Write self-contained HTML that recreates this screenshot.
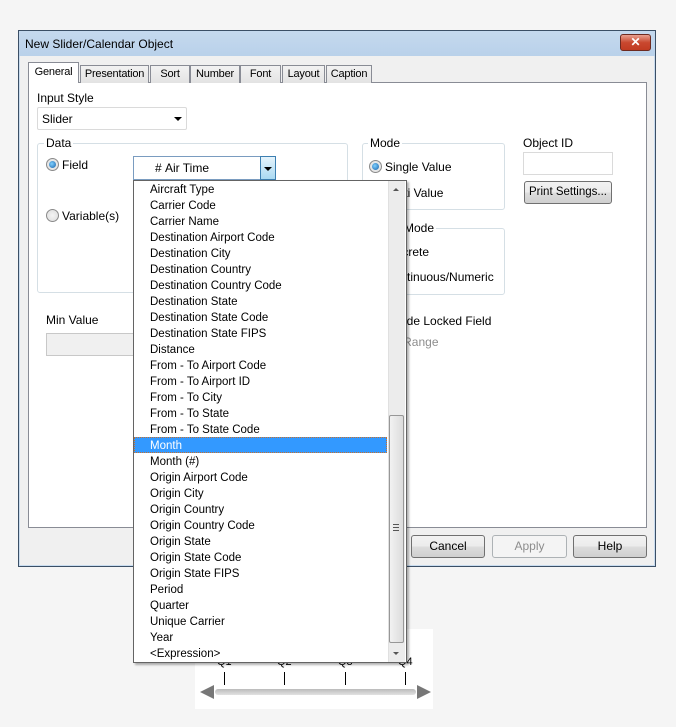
<!DOCTYPE html>
<html><head><style>
*{margin:0;padding:0;box-sizing:border-box}
body{width:676px;height:727px;background:#f5f5f5;font-family:"Liberation Sans",sans-serif;font-size:12px;color:#000;position:relative;overflow:hidden}
.a{position:absolute}
.t{position:absolute;white-space:nowrap;line-height:14px}
.grp{position:absolute;border:1px solid #d5dfe5;border-radius:3px}
.rad{position:absolute;width:13px;height:13px;border-radius:50%;border:1px solid #8a8a8a;background:radial-gradient(circle,#f4f4f4 0,#dcdcdc 100%)}
.rad.on::after{content:"";position:absolute;left:2px;top:2px;width:7px;height:7px;border-radius:50%;background:radial-gradient(circle at 40% 40%,#7fd0ff,#1660a8)}
.btn{position:absolute;height:23px;border:1px solid #707070;border-radius:3px;background:linear-gradient(#f2f2f2,#ebebeb 50%,#dddddd 51%,#cfcfcf);text-align:center;line-height:21px}
.tab{position:absolute;top:65px;height:18px;border:1px solid #898c95;border-bottom:none;background:linear-gradient(#f2f2f2,#e3e3e3);line-height:16px;text-align:center;font-size:11px;letter-spacing:-0.2px;overflow:hidden;white-space:nowrap}
.li{position:absolute;left:16px;height:16px;line-height:16px;font-size:11.5px}
</style></head><body>
<div class="a" style="left:18px;top:30px;width:638px;height:537px;background:#f0f0f0;border:1px solid #3b4f66;box-shadow:inset 0 0 0 1px #c9dcef"></div>
<div class="a" style="left:19px;top:31px;width:636px;height:25px;background:linear-gradient(#c5d9ee,#b9d1ea)"></div>
<div class="t" style="left:25px;top:37px;font-size:12px">New Slider/Calendar Object</div>
<div class="a" style="left:620px;top:34px;width:31px;height:17px;border:1px solid #6d2a20;border-radius:3px;background:linear-gradient(#e8a090,#c9482f 50%,#c13b22);color:#fff;font-weight:bold;text-align:center;line-height:15px;font-size:12px">✕</div>
<div class="a" style="left:28px;top:82px;width:619px;height:446px;background:#fff;border:1px solid #898c95"></div>
<div class="tab" style="left:28px;top:62px;height:21px;width:51px;background:#fff;z-index:2;line-height:18px">General</div>
<div class="tab" style="left:80px;width:69px">Presentation</div>
<div class="tab" style="left:150px;width:40px">Sort</div>
<div class="tab" style="left:190px;width:50px">Number</div>
<div class="tab" style="left:240px;width:41px">Font</div>
<div class="tab" style="left:282px;width:43px">Layout</div>
<div class="tab" style="left:326px;width:46px">Caption</div>

<div class="t" style="left:37px;top:91px">Input Style</div>
<div class="a" style="left:37px;top:107px;width:150px;height:23px;border:1px solid #dadada;border-radius:2px;background:#fff"></div>
<div class="t" style="left:42px;top:112px">Slider</div>
<div class="a" style="left:174px;top:117px;border-left:4px solid transparent;border-right:4px solid transparent;border-top:4px solid #000"></div>

<div class="grp" style="left:37px;top:143px;width:311px;height:150px"></div>
<div class="t" style="left:44px;top:136px;background:#fff;padding:0 2px">Data</div>
<div class="rad on" style="left:46px;top:158px"></div>
<div class="t" style="left:62px;top:158px">Field</div>
<div class="rad" style="left:46px;top:209px"></div>
<div class="t" style="left:62px;top:209px">Variable(s)</div>
<div class="a" style="left:133px;top:156px;width:143px;height:24px;border:1px solid #7a9cc0;background:#fff"></div>
<div class="t" style="left:155px;top:161px">#&nbsp;Air Time</div>
<div class="a" style="left:260px;top:156px;width:16px;height:24px;border:1px solid #3c7fb1;background:linear-gradient(#e5f4fc,#a9d9f2)"></div>
<div class="a" style="left:264px;top:167px;border-left:4px solid transparent;border-right:4px solid transparent;border-top:4px solid #000"></div>

<div class="t" style="left:46px;top:313px">Min Value</div>
<div class="a" style="left:46px;top:333px;width:100px;height:23px;border:1px solid #c8c8c8;background:#f0f0f0"></div>

<div class="grp" style="left:362px;top:143px;width:143px;height:67px"></div>
<div class="t" style="left:368px;top:136px;background:#fff;padding:0 2px">Mode</div>
<div class="rad on" style="left:369px;top:160px"></div>
<div class="t" style="left:385px;top:160px">Single Value</div>
<div class="t" style="left:385px;top:186px">Multi Value</div>
<div class="grp" style="left:362px;top:228px;width:143px;height:67px"></div>
<div class="t" style="left:368px;top:221px;background:#fff;padding:0 2px">Slider Mode</div>
<div class="t" style="left:385px;top:245px">Discrete</div>
<div class="t" style="left:385px;top:270px">Continuous/Numeric</div>
<div class="t" style="left:374px;top:314px">Override Locked Field</div>
<div class="t" style="left:374px;top:335px;color:#8d8d8d">Valid Range</div>

<div class="t" style="left:523px;top:136px">Object ID</div>
<div class="a" style="left:523px;top:152px;width:90px;height:23px;border:1px solid #dadada;background:#fff"></div>
<div class="btn" style="left:524px;top:181px;width:88px;font-size:11.5px">Print Settings...</div>

<div class="btn" style="left:411px;top:535px;width:74px">Cancel</div>
<div class="btn" style="left:492px;top:535px;width:75px;color:#8d8d8d;border-color:#adb2b5;background:#f4f4f4">Apply</div>
<div class="btn" style="left:573px;top:535px;width:74px">Help</div>

<div class="a" style="left:195px;top:629px;width:238px;height:80px;background:#fff"></div>
<div class="t" style="left:217px;top:655px;font-size:11px">Q1</div>
<div class="t" style="left:277px;top:655px;font-size:11px">Q2</div>
<div class="t" style="left:338px;top:655px;font-size:11px">Q3</div>
<div class="t" style="left:398px;top:655px;font-size:11px">Q4</div>
<div class="a" style="left:224px;top:672px;width:1px;height:13px;background:#000"></div>
<div class="a" style="left:284px;top:672px;width:1px;height:13px;background:#000"></div>
<div class="a" style="left:345px;top:672px;width:1px;height:13px;background:#000"></div>
<div class="a" style="left:405px;top:672px;width:1px;height:13px;background:#000"></div>
<div class="a" style="left:200px;top:685px;border-top:7px solid transparent;border-bottom:7px solid transparent;border-right:14px solid #777"></div>
<div class="a" style="left:417px;top:685px;border-top:7px solid transparent;border-bottom:7px solid transparent;border-left:14px solid #777"></div>
<div class="a" style="left:215px;top:689px;width:201px;height:6px;border-radius:3px;background:linear-gradient(#bbb,#e2e2e2)"></div>

<div class="a" style="left:133px;top:180px;width:274px;height:483px;background:#fff;border:1px solid #646464;box-shadow:2px 2px 2px rgba(0,0,0,.3)">
<div class="li" style="top:1px">Aircraft Type</div>
<div class="li" style="top:17px">Carrier Code</div>
<div class="li" style="top:33px">Carrier Name</div>
<div class="li" style="top:49px">Destination Airport Code</div>
<div class="li" style="top:65px">Destination City</div>
<div class="li" style="top:81px">Destination Country</div>
<div class="li" style="top:97px">Destination Country Code</div>
<div class="li" style="top:113px">Destination State</div>
<div class="li" style="top:129px">Destination State Code</div>
<div class="li" style="top:145px">Destination State FIPS</div>
<div class="li" style="top:161px">Distance</div>
<div class="li" style="top:177px">From - To Airport Code</div>
<div class="li" style="top:193px">From - To Airport ID</div>
<div class="li" style="top:209px">From - To City</div>
<div class="li" style="top:225px">From - To State</div>
<div class="li" style="top:241px">From - To State Code</div>
<div class="a" style="left:0;top:256px;width:253px;height:16px;background:#3399ff;border:1px dotted #c8702c"></div>
<div class="li" style="top:257px;color:#fff">Month</div>
<div class="li" style="top:273px">Month (#)</div>
<div class="li" style="top:289px">Origin Airport Code</div>
<div class="li" style="top:305px">Origin City</div>
<div class="li" style="top:321px">Origin Country</div>
<div class="li" style="top:337px">Origin Country Code</div>
<div class="li" style="top:353px">Origin State</div>
<div class="li" style="top:369px">Origin State Code</div>
<div class="li" style="top:385px">Origin State FIPS</div>
<div class="li" style="top:401px">Period</div>
<div class="li" style="top:417px">Quarter</div>
<div class="li" style="top:433px">Unique Carrier</div>
<div class="li" style="top:449px">Year</div>
<div class="li" style="top:465px">&lt;Expression&gt;</div>
<div class="a" style="left:254px;top:0;width:17px;height:481px;background:#ececec;border-left:1px solid #e0e0e0"></div>
<div class="a" style="left:259px;top:7px;border-left:3px solid transparent;border-right:3px solid transparent;border-bottom:3px solid #555"></div>
<div class="a" style="left:259px;top:471px;border-left:3px solid transparent;border-right:3px solid transparent;border-top:3px solid #555"></div>
<div class="a" style="left:255px;top:234px;width:15px;height:228px;border:1px solid #979797;border-radius:2px;background:linear-gradient(90deg,#f2f2f2,#dcdcdc)"></div>
<div class="a" style="left:259px;top:343px;width:6px;height:7px;border-top:1px solid #555;border-bottom:1px solid #555"></div>
<div class="a" style="left:259px;top:346px;width:6px;height:1px;background:#555"></div>
</div>
</body></html>
